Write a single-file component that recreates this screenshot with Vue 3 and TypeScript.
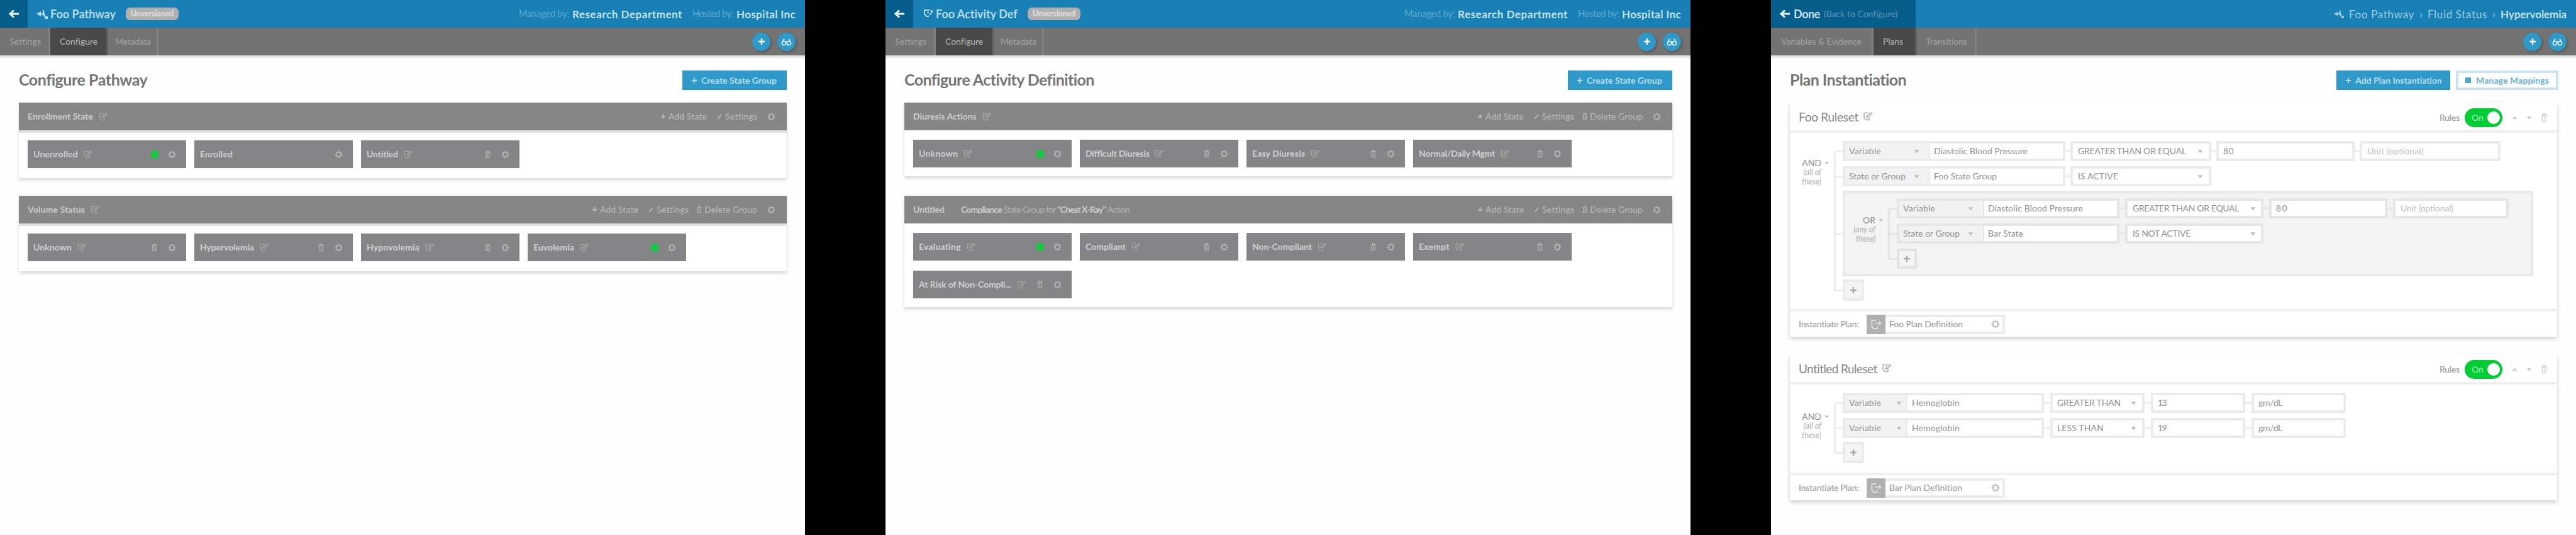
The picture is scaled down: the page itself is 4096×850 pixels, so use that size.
<script setup lang="ts">
import { h, type Directive, type FunctionalComponent } from 'vue'

// Tracks a label out (or in) so that it fills the given width in pixels.
const vFit: Directive<HTMLElement, number | undefined> = {
  mounted(el, binding) {
    const target = binding.value
    const count = (el.textContent ?? '').length
    if (!target || !count) return
    const natural = el.getBoundingClientRect().width
    el.style.letterSpacing = `${((target - natural) / count).toFixed(3)}px`
    el.style.width = `${target}px`
  },
}

const shapes: Record<string, { box: string; d: string; fill?: boolean; w?: number }> = {
  back: { box: '0 0 18 18', d: 'M17 9H4M9 3.5L3 9l6 5.5', w: 3 },
  path: { box: '0 0 20 18', d: 'M1 9l7-4v3h3V3h2l1 7 2 3h3v4h-5v-3l-4-4H8v3z', fill: true },
  activity: { box: '0 0 16 16', d: 'M1 2h9M2 2v6l3 4h4M6 6h3M10 10l5-7M12 2l3 3', w: 2 },
  edit: { box: '0 0 16 14', d: 'M9 1.5H2v7.5l3 3.5h5V9M6 8l1-2.500L13 1l1.500 1.500L9 8z', w: 1.4 },
  plus: { box: '0 0 12 12', d: 'M6 1v10M1 6h10', w: 2.4 },
  pencil: { box: '0 0 12 12', d: 'M2 10.500L9.500 2', w: 2.4 },
  trash: { box: '0 0 10 14', d: 'M0.500 3h9M3.500 2.500V1h3v1.500M2 3v9.500h6V3M5 5.500v4.500', w: 1.3 },
  gear: { box: '0 0 14 14', d: 'M7 3a4 4 0 1 0 0 8a4 4 0 1 0 0-8M7 .5v2M7 11.500v2M.5 7h2M11.500 7h2M2.400 2.400l1.400 1.400M10.200 10.200l1.400 1.400M11.600 2.400l-1.400 1.400M3.800 10.200l-1.400 1.400', w: 1.8 },
  down: { box: '0 0 8 6', d: 'M0.500 1h7L4 5.500z', fill: true },
  up: { box: '0 0 8 6', d: 'M0.500 5h7L4 .5z', fill: true },
  people: { box: '0 0 20 16', d: 'M2 11a3.500 3.500 0 1 1 7 0a3.500 3.500 0 1 1-7 0M11 11a3.500 3.500 0 1 1 7 0a3.500 3.500 0 1 1-7 0M3 8l3-5M17 8l-3-5M8 8h4', w: 2 },
  plan: { box: '0 0 20 18', d: 'M10 2H3v10l3 4h6v-5M8 7h10M15 4l3 3-3 3', w: 1.8 },
}

const Icon: FunctionalComponent<{ name: string }> = (props) => {
  const s = shapes[props.name]
  return h('svg', { viewBox: s.box, class: 'ic ic-' + props.name, 'aria-hidden': 'true' }, [
    h('path', {
      d: s.d,
      fill: s.fill ? 'currentColor' : 'none',
      stroke: s.fill ? 'none' : 'currentColor',
      'stroke-width': s.w ?? 1,
    }),
  ])
}
Icon.props = ['name']

interface State { name: string; w: number; start?: boolean; fixed?: boolean }
interface Group { name: string; w: number; note?: boolean; removable?: boolean; states: State[] }
interface Panel { kind: string; icon: string; name: string; w: number; title: string; tw: number; groups: Group[] }

const panels: Panel[] = [
  {
    kind: 'pathway', icon: 'path', name: 'Foo Pathway', w: 104, title: 'Configure Pathway', tw: 204,
    groups: [
      {
        name: 'Enrollment State', w: 104,
        states: [
          { name: 'Unenrolled', w: 71, start: true },
          { name: 'Enrolled', w: 52, fixed: true },
          { name: 'Untitled', w: 50 },
        ],
      },
      {
        name: 'Volume Status', w: 91, removable: true,
        states: [
          { name: 'Unknown', w: 61 },
          { name: 'Hypervolemia', w: 86 },
          { name: 'Hypovolemia', w: 84 },
          { name: 'Euvolemia', w: 65, start: true },
        ],
      },
    ],
  },
  {
    kind: 'activity', icon: 'activity', name: 'Foo Activity Def', w: 130, title: 'Configure Activity Definition', tw: 302,
    groups: [
      {
        name: 'Diuresis Actions', w: 101, removable: true,
        states: [
          { name: 'Unknown', w: 62, start: true },
          { name: 'Difficult Diuresis', w: 101 },
          { name: 'Easy Diuresis', w: 84 },
          { name: 'Normal/Daily Mgmt', w: 121 },
        ],
      },
      {
        name: 'Untitled', w: 50, note: true, removable: true,
        states: [
          { name: 'Evaluating', w: 67, start: true },
          { name: 'Compliant', w: 64 },
          { name: 'Non-Compliant', w: 95 },
          { name: 'Exempt', w: 49 },
          { name: 'At Risk of Non-Compli...', w: 147 },
        ],
      },
    ],
  },
]

interface Cell { text: string; w: number; size: string; select?: boolean; hint?: boolean }
interface Rule { type: string; tw: number; subject: string; sw: number; size: string; cells: Cell[] }

const outer: Rule[] = [
  {
    type: 'Variable', tw: 51, subject: 'Diastolic Blood Pressure', sw: 149, size: 'lead',
    cells: [
      { text: 'GREATER THAN OR EQUAL', w: 172, size: 'op', select: true },
      { text: '80', w: 17, size: 'val' },
      { text: 'Unit (optional)', w: 90, size: 'unit', hint: true },
    ],
  },
  {
    type: 'State or Group', tw: 90, subject: 'Foo State Group', sw: 100, size: 'lead',
    cells: [{ text: 'IS ACTIVE', w: 64, size: 'op', select: true }],
  },
]
const inner: Rule[] = [
  {
    type: 'Variable', tw: 51, subject: 'Diastolic Blood Pressure', sw: 151, size: 'lead',
    cells: [
      { text: 'GREATER THAN OR EQUAL', w: 169, size: 'iop', select: true },
      { text: '80', w: 19, size: 'ival' },
      { text: 'Unit (optional)', w: 84, size: 'iunit', hint: true },
    ],
  },
  {
    type: 'State or Group', tw: 90, subject: 'Bar State', sw: 56, size: 'lead',
    cells: [{ text: 'IS NOT ACTIVE', w: 92, size: 'iop', select: true }],
  },
]
const hemo: Rule[] = [
  {
    type: 'Variable', tw: 51, subject: 'Hemoglobin', sw: 76, size: 'short',
    cells: [
      { text: 'GREATER THAN', w: 101, size: 'sm', select: true },
      { text: '13', w: 13, size: 'sm' },
      { text: 'gm/dL', w: 38, size: 'sm' },
    ],
  },
  {
    type: 'Variable', tw: 51, subject: 'Hemoglobin', sw: 76, size: 'short',
    cells: [
      { text: 'LESS THAN', w: 74, size: 'sm', select: true },
      { text: '19', w: 13, size: 'sm' },
      { text: 'gm/dL', w: 38, size: 'sm' },
    ],
  },
]

const rulesets = [
  { name: 'Foo Ruleset', w: 95, rules: outer, nested: inner, plan: 'Foo Plan Definition', pw: 117 },
  { name: 'Untitled Ruleset', w: 125, rules: hemo, nested: null as Rule[] | null, plan: 'Bar Plan Definition', pw: 116 },
]

const RuleRow: FunctionalComponent<{ rule: Rule }> = (props) => {
  const r = props.rule
  return [
    h('div', { class: ['field', 'type', r.size] }, [h('span', { class: 'lbl', 'data-w': r.tw }, r.type), h(Icon, { name: 'down' })]),
    h('div', { class: ['field', 'subject', r.size] }, [h('span', { class: 'lbl', 'data-w': r.sw }, r.subject)]),
    ...r.cells.flatMap((c) => [
      h('i', { class: ['link', r.size] }),
      h('div', { class: ['field', c.size, { hint: c.hint }] }, [
        h('span', { class: 'lbl', 'data-w': c.w }, c.text),
        c.select ? h(Icon, { name: 'down' }) : null,
      ]),
    ]),
  ]
}
RuleRow.props = ['rule']

// Applies the same tracking to every label inside a rule row.
const vFitAll: Directive<HTMLElement> = {
  mounted(el) {
    el.querySelectorAll<HTMLElement>('.lbl').forEach((label) => {
      const target = Number(label.dataset.w)
      const count = (label.textContent ?? '').length
      const natural = label.getBoundingClientRect().width
      label.style.letterSpacing = `${((target - natural) / count).toFixed(3)}px`
      label.style.width = `${target}px`
    })
  },
}
</script>

<template>
  <main class="board">
    <section v-for="p in panels" :key="p.kind" class="panel" :class="p.kind">
      <header class="top">
        <button class="back"><Icon name="back" /></button>
        <Icon :name="p.icon" />
        <b v-fit="p.w" class="t name">{{ p.name }}</b>
        <span class="badge"><span v-fit="68" class="t">Unversioned</span></span>
        <div class="owners">
          <span v-fit="80" class="t by">Managed by:</span>
          <b v-fit="175" class="t who">Research Department</b>
          <span v-fit="65" class="t by host">Hosted by:</span>
          <b v-fit="94" class="t who">Hospital Inc</b>
        </div>
      </header>
      <nav class="tabs">
        <a class="tab settings"><span v-fit="50" class="t">Settings</span></a>
        <a class="tab configure active"><span v-fit="60" class="t">Configure</span></a>
        <a class="tab metadata"><span v-fit="57" class="t">Metadata</span></a>
        <div class="round"><button><Icon name="plus" /></button><button><Icon name="people" /></button></div>
      </nav>
      <div class="titlebar">
        <h1 v-fit="p.tw" class="t">{{ p.title }}</h1>
        <button class="btn create"><Icon name="plus" /><span v-fit="120" class="t">Create State Group</span></button>
      </div>
      <article v-for="g in p.groups" :key="g.name" class="group">
        <div class="ghead">
          <span v-fit="g.w" class="t gname">{{ g.name }}</span>
          <span v-if="g.note" v-fit="268" class="t note"><b>Compliance</b> State Group for <b>"Chest X-Ray"</b> Action</span>
          <Icon v-else name="edit" />
          <div class="acts">
            <Icon name="plus" /><span v-fit="61" class="t">Add State</span>
            <Icon name="pencil" /><span v-fit="51" class="t">Settings</span>
            <template v-if="g.removable"><Icon name="trash" /><span v-fit="84" class="t">Delete Group</span></template>
            <Icon name="gear" />
          </div>
        </div>
        <div class="states">
          <div v-for="s in g.states" :key="s.name" class="state">
            <span v-fit="s.w" class="t">{{ s.name }}</span>
            <Icon v-if="!s.fixed" name="edit" />
            <div class="tools">
              <i v-if="s.start" class="dot" />
              <Icon v-else-if="!s.fixed" name="trash" />
              <Icon name="gear" />
            </div>
          </div>
        </div>
      </article>
    </section>

    <section class="panel plans">
      <header class="top">
        <button class="back done">
          <Icon name="back" /><b v-fit="42" class="t">Done</b><span v-fit="117" class="t sub">(Back to Configure)</span>
        </button>
        <div class="crumbs">
          <Icon name="path" />
          <span v-fit="104" class="t">Foo Pathway</span><span class="sep">›</span>
          <span v-fit="95" class="t">Fluid Status</span><span class="sep">›</span>
          <b v-fit="105" class="t">Hypervolemia</b>
        </div>
      </header>
      <nav class="tabs">
        <a class="tab evidence"><span v-fit="128" class="t">Variables &amp; Evidence</span></a>
        <a class="tab plan active"><span v-fit="32" class="t">Plans</span></a>
        <a class="tab transitions"><span v-fit="66" class="t">Transitions</span></a>
        <div class="round"><button><Icon name="plus" /></button><button><Icon name="people" /></button></div>
      </nav>
      <div class="titlebar">
        <h1 v-fit="186" class="t">Plan Instantiation</h1>
        <button class="btn add"><Icon name="plus" /><span v-fit="138" class="t">Add Plan Instantiation</span></button>
        <button class="btn ghost"><i class="sq" /><span v-fit="116" class="t">Manage Mappings</span></button>
      </div>

      <article v-for="r in rulesets" :key="r.name" class="ruleset">
        <div class="rhead">
          <span v-fit="r.w" class="t rname">{{ r.name }}</span>
          <Icon name="edit" />
          <div class="rtools">
            <span v-fit="32" class="t">Rules</span>
            <span class="toggle"><span>On</span><i /></span>
            <Icon name="up" /><Icon name="down" /><Icon name="trash" />
          </div>
        </div>
        <div class="rbody">
          <div class="logic" :class="{ low: !r.nested }">
            <div class="words"><b>AND</b><em>(all of<br>these)</em></div><Icon name="down" />
          </div>
          <div class="tree">
            <div v-for="(rule, i) in r.rules" :key="i" v-fit-all class="item">
              <i class="stub" /><div class="row"><RuleRow :rule="rule" /></div>
            </div>
            <div v-if="r.nested" class="item nestitem">
              <i class="stub" />
              <div class="nested">
                <div class="logic">
                  <div class="words"><b>OR</b><em>(any of<br>these)</em></div><Icon name="down" />
                </div>
                <div class="tree">
                  <div v-for="(rule, i) in r.nested" :key="i" v-fit-all class="item">
                    <i class="stub" /><div class="row"><RuleRow :rule="rule" /></div>
                  </div>
                  <div class="item"><i class="stub" /><button class="more"><Icon name="plus" /></button></div>
                </div>
              </div>
            </div>
            <div class="item lastitem"><i class="stub" /><button class="more"><Icon name="plus" /></button></div>
          </div>
        </div>
        <footer class="rfoot">
          <span v-fit="96" class="t">Instantiate Plan:</span>
          <div class="planbox">
            <span class="planicon"><Icon name="plan" /></span>
            <span v-fit="r.pw" class="t">{{ r.plan }}</span>
            <Icon name="gear" />
          </div>
        </footer>
      </article>
    </section>
  </main>
</template>

<style>
body { background: #000; overflow: hidden; }
.ic { display: block; flex: none; width: 14px; height: 14px; }
.lbl { display: inline-block; white-space: nowrap; }
.link { flex: none; width: 8px; height: 4px; background: #f0f0f0; }
.link.short { width: 10px; }
.field {
  display: flex; align-items: center; justify-content: space-between; flex: none;
  height: 32px; box-sizing: border-box; padding: 0 12px 0 11px;
  border: 4px solid #ebebeb; background: #fff; color: #929292; font-size: 14px;
}
.field .ic-down { width: 9px; height: 7px; color: #bbb; }
.field.type { background: #f2f2f2; border-right: 0; padding: 0 15px 0 6px; }
.field.subject { border-left-width: 2px; padding-left: 6px; }
.field.lead.type { width: 137px; }
.field.lead.subject { width: 217px; }
.field.short.type { width: 101px; padding-right: 7px; }
.field.short.subject { width: 219px; padding-left: 7px; }
.field.op { width: 224px; padding: 0 9px 0 8px; }
.field.val { width: 220px; padding-left: 7px; }
.field.unit { width: 224px; padding-left: 8px; }
.field.iop { width: 220px; padding: 0 8px 0 8px; }
.field.ival { width: 188px; padding-left: 7px; }
.field.iunit { width: 184px; padding-left: 8px; }
.field.sm { width: 150px; padding: 0 9px 0 7px; }
.field.hint { color: #c0c0c0; }
.nested .field { border-color: #e6e6e6; }
.nested .link { width: 9px; background: #e9e9e9; }
</style>

<style scoped>
.board {
  display: flex; gap: 128px; width: 4096px; height: 850px; background: #000;
  font-family: Lato, "Open Sans", sans-serif; line-height: 1;
}
.panel { width: 1280px; height: 850px; flex: none; background: #fefefe; overflow: hidden; }
button { font: inherit; border: 0; padding: 0; margin: 0; display: flex; align-items: center; }
.t { display: inline-block; white-space: nowrap; flex: none; }

.top { display: flex; align-items: center; height: 44px; background: #1980b5; color: #b5dcea; font-size: 18px; }
.back { width: 44px; height: 44px; justify-content: center; background: #075e8c; color: #e8f7fb; }
.back .ic { width: 18px; height: 18px; }
.top > .ic-path { width: 20px; height: 18px; margin: 0 3px 0 13px; }
.top > .ic-activity { width: 16px; height: 16px; margin: 0 4px 0 16px; }
.badge {
  display: flex; align-items: center; justify-content: center; width: 84px; height: 20px; margin-left: 16px;
  border-radius: 7px; background: #b0b0b0; color: #e0e0e0; font-size: 12.500px; font-weight: 700;
}
.owners { display: flex; align-items: center; margin-left: auto; margin-right: 15px; }
.by { color: #5eabd0; font-size: 14.500px; margin-right: 5px; }
.host { margin-left: 16px; }
.who { font-size: 17px; color: #c0e2ee; }

.tabs { display: flex; align-items: center; height: 44px; background: #737373; border-bottom: 4px solid #e6e6e6; color: #a3a3a3; font-size: 14px; }
.tab { display: flex; align-items: center; height: 44px; box-sizing: border-box; border-right: 3px solid #818181; padding-left: 15px; }
.settings { width: 80px; }
.configure { width: 92px; }
.metadata { width: 80px; padding-left: 11px; }
.evidence { width: 163px; padding-left: 16px; }
.plan { width: 69px; }
.transitions { width: 95px; padding-left: 14px; }
.tab.active { background: #484848; border-right-color: #606060; color: #b5b5b5; }
.round { display: flex; gap: 11px; margin-left: auto; margin-right: 15px; }
.round button { width: 29px; height: 29px; border-radius: 50%; justify-content: center; background: #2f99c9; color: #d7edf5; box-shadow: 2px 2px 4px rgba(0, 0, 0, .25); }
.round .ic-plus { width: 12px; height: 12px; color: #fff; }
.round .ic-people { width: 19px; height: 14px; }

.titlebar { display: flex; align-items: center; height: 71px; padding: 0 29px 0 30px; }
h1 { margin: 0 auto 0 0; padding-bottom: 2px; font-size: 25px; font-weight: 700; color: #757575; }
.btn { height: 31px; box-sizing: border-box; background: #2f99c9; color: #b4dcec; font-size: 14px; font-weight: 700; }
.btn .ic-plus { width: 10px; height: 10px; margin-right: 6px; }
.create { width: 166px; padding-left: 14px; }
.add { width: 181px; padding-left: 14px; margin-right: 9px; }
.ghost { width: 163px; padding-left: 11px; background: #fff; border: 4px solid #c9e4ee; color: #67b4d3; }
.sq { width: 9px; height: 9px; background: #4ba6ce; margin-right: 8px; }
.plans .titlebar { padding-right: 28px; }

.group { width: 1221px; margin: 0 0 28px 30px; background: #fff; box-shadow: 0 3px 5px rgba(0, 0, 0, .16); }
.activity .group { margin-bottom: 31px; }
.ghead { display: flex; align-items: center; height: 44px; padding: 0 18px 0 14px; background: #868686; color: #cbcbcb; font-size: 14px; }
.pathway .ghead { box-shadow: 0 4px 0 #e0e0e0; }
.gname { font-weight: 700; margin-right: 8px; }
.ghead .ic-edit, .state .ic-edit { width: 16px; height: 13px; color: #a8a8a8; }
.note { margin-left: 18px; color: #b2b2b2; }
.note b { color: #cbcbcb; }
.acts { display: flex; align-items: center; margin-left: auto; color: #bababa; }
.acts .t { margin-right: 16px; }
.acts .ic-plus, .acts .ic-pencil { width: 9px; height: 10px; margin-right: 4px; }
.acts .ic-trash { width: 8px; height: 12px; margin-right: 4px; margin-left: -3px; }
.acts .ic-gear { width: 13px; height: 13px; }
.states { display: grid; grid-template-columns: repeat(4, 252px); gap: 16px 13px; padding: 16px 14px; }
.state { display: flex; align-items: center; height: 44px; box-sizing: border-box; padding: 0 16px 0 9px; background: #858587; color: #cfcfcf; font-size: 14px; font-weight: 700; }
.activity .states { padding: 15px 14px 14px; }
.state .ic-edit { margin-left: 8px; }
.tools { display: flex; align-items: center; gap: 15px; margin-left: auto; color: #b8b8b8; }
.tools .ic-gear { width: 13px; height: 13px; }
.tools .ic-trash { width: 9px; height: 13px; margin-right: 2px; }
.dot { width: 12px; height: 13px; border-radius: 4px; background: #18c540; }

.done { width: 230px; justify-content: flex-start; padding-left: 13px; }
.done b { margin: 0 6px 0 5px; color: #c2e3ef; }
.sub { font-size: 14px; color: #5597b8; }
.crumbs { display: flex; align-items: center; margin-left: auto; margin-right: 15px; color: #9bcde1; font-size: 17px; }
.crumbs .ic-path { width: 18px; height: 16px; margin-right: 7px; }
.crumbs b { color: #c0e2ee; }
.sep { width: 21px; text-align: center; }

.ruleset { width: 1220px; margin: 0 0 28px 30px; background: #fff; color: #949494; font-size: 14px; box-shadow: 0 3px 6px rgba(0, 0, 0, .2); }
.rhead { display: flex; align-items: center; height: 44px; padding: 0 15px 0 14px; border-bottom: 4px solid #f0f0f0; }
.rname { font-size: 19px; color: #878787; margin-right: 7px; }
.rhead .ic-edit { width: 16px; height: 14px; color: #aaa; }
.rtools { display: flex; align-items: center; margin-left: auto; padding-top: 4px; }
.toggle { display: flex; align-items: center; justify-content: space-between; box-sizing: border-box; width: 60px; height: 30px; margin: 0 15px 0 8px; padding: 0 4px 0 11px; border-radius: 15px; background: #0c3; color: #a5eab5; font-size: 14px; }
.toggle i { width: 20px; height: 20px; border-radius: 50%; background: #fff; }
.rtools .ic { color: #ccc; width: 9px; height: 8px; margin-right: 14px; }
.rtools .ic-trash { width: 11px; height: 14px; margin-right: 0; }
.rbody { display: flex; box-sizing: border-box; min-height: 280px; padding: 9px 0 11px; }
.ruleset:last-child .rbody { min-height: 140px; }
.logic { display: flex; align-items: flex-start; box-sizing: border-box; flex: none; width: 70px; padding: 30px 8px 0 0; justify-content: flex-end; }
.logic.low { padding-top: 33px; }
.logic .ic-down { width: 7px; height: 6px; margin: 6px 0 0 5px; color: #bbb; }
.words { display: flex; flex-direction: column; align-items: flex-end; text-align: right; color: #909090; }
.words b { font-weight: 400; font-size: 14px; line-height: 17px; }
.words em { font-size: 12.500px; line-height: 14.500px; color: #b0b0b0; }
.tree { display: flex; flex-direction: column; }
.item { display: flex; }
.row { display: flex; align-items: center; padding: 4px 0; }
.stub { display: flex; flex-direction: column; width: 14px; flex: none; }
.stub::before, .stub::after { content: ""; flex: 1; box-sizing: border-box; border-left: 3px solid #ededed; }
.stub::before { border-bottom: 3px solid #ededed; margin-bottom: -1px; }
.item:first-child > .stub::before { border-left-color: transparent; }
.item:last-child > .stub::after { border-left-color: transparent; }
.nested { display: flex; box-sizing: border-box; width: 1098px; height: 136px; margin: 3px 0; padding: 4px 0; border: 4px solid #e7e7e7; background: #f3f3f3; }
.nested .logic { width: 68px; }
.nested .stub::before, .nested .stub::after { border-color: #e3e3e3; }
.nested .item:first-child > .stub::before, .nested .item:last-child > .stub::after { border-left-color: transparent; }
.more { box-sizing: border-box; width: 34px; height: 34px; margin: 2px 0; justify-content: center; border: 4px solid #ebebeb; border-radius: 3px; background: #f4f4f4; color: #aaa; }
.more .ic-plus { width: 12px; height: 12px; }
.nested .more { width: 32px; height: 32px; margin: 4px 0; border-color: #e3e3e3; }
.rfoot { display: flex; align-items: center; box-sizing: border-box; height: 44px; padding-left: 14px; border-top: 4px solid #f0f0f0; }
.planbox { display: flex; align-items: center; box-sizing: border-box; width: 220px; height: 31px; margin-left: 12px; border: 4px solid #ebebeb; border-left: 0; padding-right: 4px; }
.planicon { display: flex; align-items: center; justify-content: center; width: 30px; height: 31px; margin-right: 6px; background: #b0b0b0; color: #e2e2e2; }
.planicon .ic { width: 20px; height: 17px; }
.planbox .ic-gear { margin-left: auto; color: #bbb; }
</style>
